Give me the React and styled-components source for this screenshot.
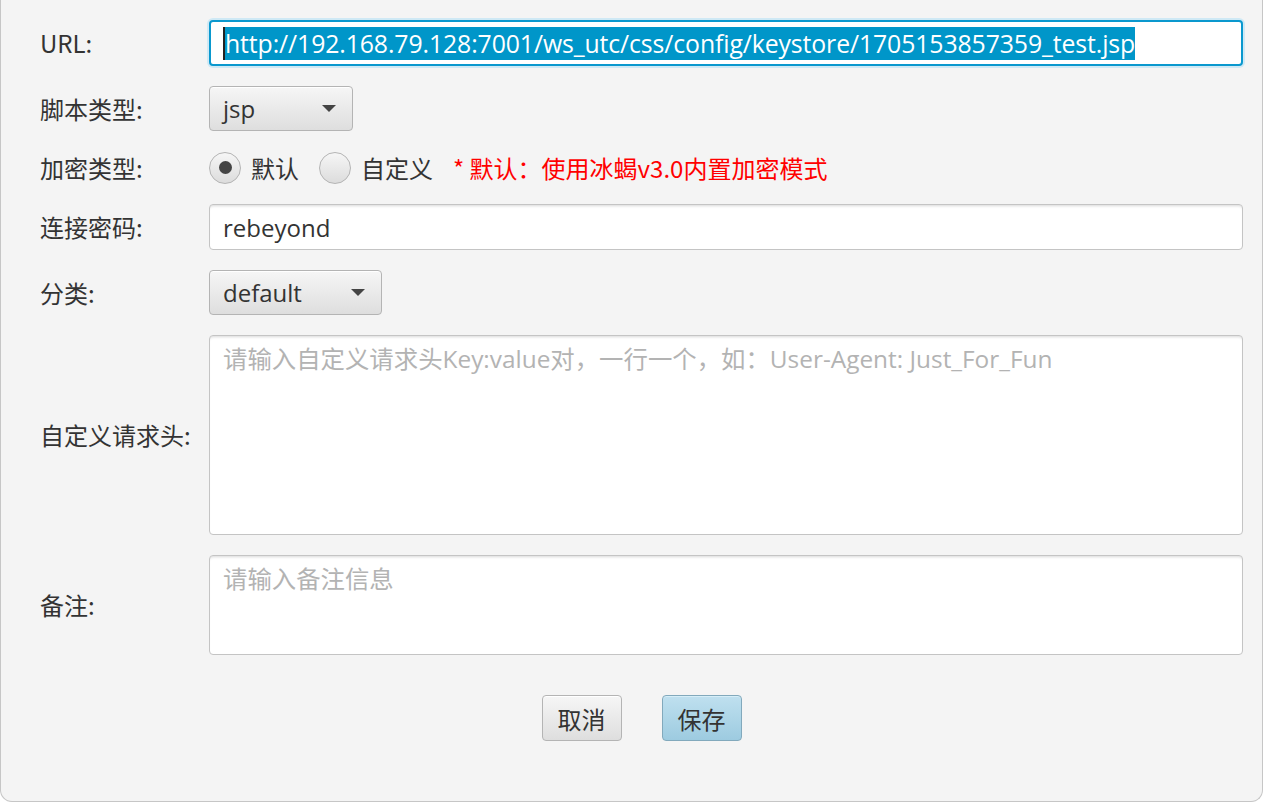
import React from "react";
import styled, { createGlobalStyle } from "styled-components";

const Global = createGlobalStyle`
  html, body { margin: 0; padding: 0; background: #ffffff; }
  * { box-sizing: border-box; }
`;

const Window = styled.div`
  width: 1263px;
  height: 802px;
  background: #f4f4f4;
  border: 1px solid #c6c6c6;
  border-top: none;
  border-radius: 0 0 12px 12px;
  padding: 20px 19px 0 39px;
  font-family: "Open Sans", "Noto Sans CJK SC", sans-serif;
  font-size: 24px;
  color: #333333;
`;

const Form = styled.div`
  display: grid;
  grid-template-columns: 169px 1fr;
  row-gap: 20px;
  align-items: center;
`;

const Label = styled.div`
  font-family: "Noto Sans CJK SC", sans-serif;
  font-size: 24px;
  color: #333;
  line-height: 1;
`;

const TextBox = styled.div`
  height: ${(p) => p.$h || 46}px;
  background: #ffffff;
  border: 1px solid #c4c4c4;
  border-radius: 4px;
  box-shadow: inset 0 3px 3px -2px #d8d8d8;
  padding: 0 13px;
  display: flex;
  align-items: ${(p) => (p.$multi ? "flex-start" : "center")};
  padding-top: ${(p) => (p.$multi ? "4px" : "0")};
  color: ${(p) => (p.$placeholder ? "#b3b3b3" : "#333")};
  white-space: nowrap;
  overflow: hidden;
`;

const FocusBox = styled(TextBox)`
  border: 2px solid #0a98ce;
  box-shadow: 0 0 0 2px #cfe9f5;
  padding: 0 12px;
`;

const Selected = styled.span`
  background: #0096c9;
  color: #ffffff;
  border-left: 2px solid #222;
  line-height: 33px;
  font-size: 24.8px;
  letter-spacing: -0.1px;
`;

const Select = styled.div`
  width: ${(p) => p.$w}px;
  height: 45px;
  border: 1px solid #b4b4b4;
  border-radius: 4px;
  background: linear-gradient(#f6f6f6, #dedede);
  box-shadow: inset 0 1px 0 #ffffff;
  display: flex;
  align-items: center;
  justify-content: space-between;
  padding: 0 16px 0 13px;
  color: #333;
`;

const Arrow = styled.span`
  width: 0;
  height: 0;
  border-left: 7px solid transparent;
  border-right: 7px solid transparent;
  border-top: 7px solid #444;
`;

const RadioRow = styled.div`
  height: 33px;
  display: flex;
  align-items: center;
`;

const RadioCircle = styled.span`
  width: 32px;
  height: 32px;
  border-radius: 50%;
  border: 1px solid #b4b4b4;
  background: linear-gradient(#f6f6f6, #dcdcdc);
  display: flex;
  align-items: center;
  justify-content: center;
  margin-right: 10px;
  &::after {
    content: "";
    width: 13px;
    height: 13px;
    border-radius: 50%;
    background: ${(p) => (p.$on ? "#444" : "transparent")};
  }
`;

const RadioText = styled.span`
  font-family: "Noto Sans CJK SC", sans-serif;
  font-size: 24px;
  color: #333;
  margin-right: ${(p) => p.$mr || 0}px;
`;

const Hint = styled.span`
  font-family: "Noto Sans CJK SC", sans-serif;
  font-size: 24px;
  color: #ff0000;
`;

const Buttons = styled.div`
  display: flex;
  justify-content: center;
  gap: 40px;
  margin-top: 40px;
`;

const Button = styled.button`
  width: 80px;
  height: 46px;
  border-radius: 4px;
  border: 1px solid ${(p) => (p.$primary ? "#82a9bc" : "#b4b4b4")};
  background: ${(p) =>
    p.$primary ? "linear-gradient(#bfe0ef, #9dcbe0)" : "linear-gradient(#f6f6f6, #dedede)"};
  box-shadow: inset 0 1px 0 ${(p) => (p.$primary ? "#d6eef8" : "#ffffff")};
  font-family: "Noto Sans CJK SC", sans-serif;
  font-size: 24px;
  color: #333;
  padding: 0;
`;

const Placeholder = styled.span`
  font-family: "Open Sans", "Noto Sans CJK SC", sans-serif;
  font-size: 24.4px;
`;

export default function App() {
  return (
    <>
      <Global />
      <Window>
        <Form>
          <Label>URL:</Label>
          <FocusBox>
            <Selected>http://192.168.79.128:7001/ws_utc/css/config/keystore/1705153857359_test.jsp</Selected>
          </FocusBox>

          <Label>脚本类型:</Label>
          <div>
            <Select $w={144}>
              <span>jsp</span>
              <Arrow />
            </Select>
          </div>

          <Label>加密类型:</Label>
          <RadioRow>
            <RadioCircle $on />
            <RadioText $mr={20}>默认</RadioText>
            <RadioCircle />
            <RadioText $mr={20}>自定义</RadioText>
            <Hint>* 默认：使用冰蝎v3.0内置加密模式</Hint>
          </RadioRow>

          <Label>连接密码:</Label>
          <TextBox>rebeyond</TextBox>

          <Label>分类:</Label>
          <div>
            <Select $w={173}>
              <span>default</span>
              <Arrow />
            </Select>
          </div>

          <Label>自定义请求头:</Label>
          <TextBox $h={200} $multi $placeholder>
            <Placeholder>请输入自定义请求头Key:value对，一行一个，如：User-Agent: Just_For_Fun</Placeholder>
          </TextBox>

          <Label>备注:</Label>
          <TextBox $h={100} $multi $placeholder>
            <Placeholder>请输入备注信息</Placeholder>
          </TextBox>
        </Form>
        <Buttons>
          <Button>取消</Button>
          <Button $primary>保存</Button>
        </Buttons>
      </Window>
    </>
  );
}
